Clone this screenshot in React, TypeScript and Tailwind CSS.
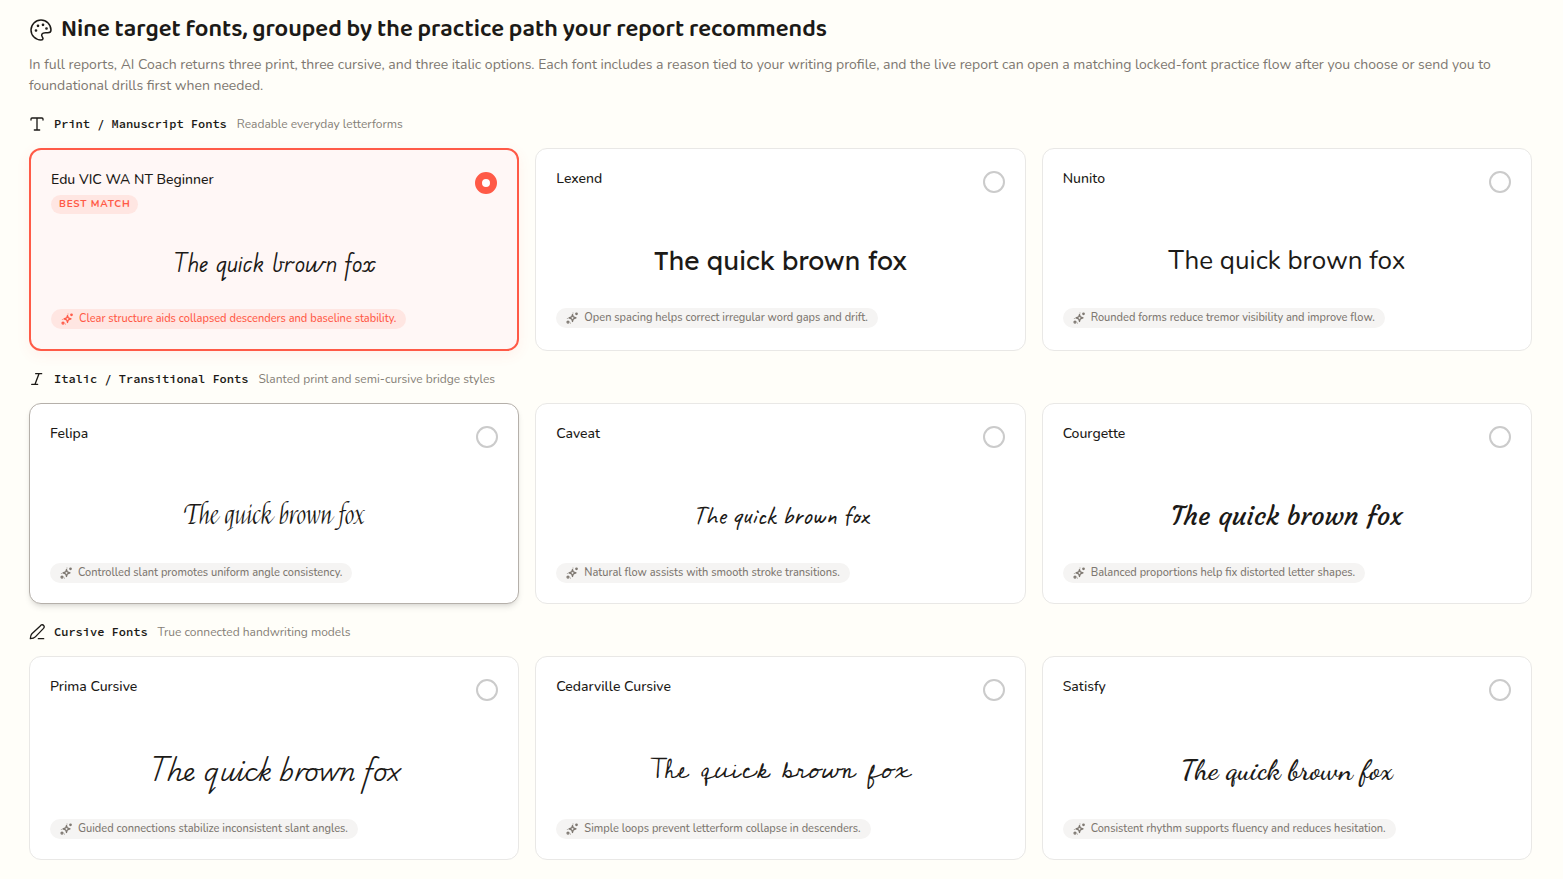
import { useState } from 'react';

const PREVIEW_TEXT = 'The quick brown fox';

const fontGroups = [
  {
    title: 'Print / Manuscript Fonts',
    subtitle: 'Readable everyday letterforms',
    icon: PrintIcon,
    previewHeight: 'min-h-[95px]',
    fonts: [
      {
        name: 'Edu VIC WA NT Beginner',
        reason: 'Clear structure aids collapsed descenders and baseline stability.',
        preview: "font-['Edu_VIC_WA_NT_Beginner','Lato',cursive] text-[26px]",
        best: true,
      },
      {
        name: 'Lexend',
        reason: 'Open spacing helps correct irregular word gaps and drift.',
        preview: "font-['Lexend','Inter',sans-serif] text-[26px]",
      },
      {
        name: 'Nunito',
        reason: 'Rounded forms reduce tremor visibility and improve flow.',
        preview: "font-['Nunito','Open_Sans',sans-serif] text-[26px]",
      },
    ],
  },
  {
    title: 'Italic / Transitional Fonts',
    subtitle: 'Slanted print and semi-cursive bridge styles',
    icon: ItalicIcon,
    previewHeight: 'min-h-[95px]',
    fonts: [
      {
        name: 'Felipa',
        reason: 'Controlled slant promotes uniform angle consistency.',
        preview: "font-['Felipa','Liberation_Serif',serif] text-[26px]",
        highlighted: true,
      },
      {
        name: 'Caveat',
        reason: 'Natural flow assists with smooth stroke transitions.',
        preview: "font-['Caveat','Lato',cursive] text-[26px]",
      },
      {
        name: 'Courgette',
        reason: 'Balanced proportions help fix distorted letter shapes.',
        preview: "font-['Courgette','Lato',cursive] text-[26px]",
      },
    ],
  },
  {
    title: 'Cursive Fonts',
    subtitle: 'True connected handwriting models',
    icon: CursiveIcon,
    previewHeight: 'min-h-[98px]',
    fonts: [
      {
        name: 'Prima Cursive',
        reason: 'Guided connections stabilize inconsistent slant angles.',
        preview: "font-['Prima_Cursive','Playwrite_NZ','Lato',cursive] font-light text-[25px]",
      },
      {
        name: 'Cedarville Cursive',
        reason: 'Simple loops prevent letterform collapse in descenders.',
        preview: "font-['Cedarville_Cursive','Lato',cursive] text-[28px]",
      },
      {
        name: 'Satisfy',
        reason: 'Consistent rhythm supports fluency and reduces hesitation.',
        preview: "font-['Satisfy','Dancing_Script','Lato',cursive] font-semibold text-[29px]",
      },
    ],
  },
];

function PaletteIcon() {
  return (
    <svg className="size-6 shrink-0" viewBox="0 0 24 24" fill="none" stroke="currentColor" strokeWidth="1.5" strokeLinejoin="round" aria-hidden="true">
      <path d="M22 12c0-5.5-4.5-10-10-10S2 6.500 2 12s4.500 10 10 10c.8 0 2-.1 2-1.200 0-.6-.3-1.100-.6-1.600-.6-.9-1.200-1.800-.5-3 .8-1.400 2.100-1.400 3.700-1.400h2.200c2 0 3.200-.9 3.200-2.800Z" />
      <circle cx="7" cy="12.500" r=".6" />
      <circle cx="9" cy="7.800" r=".6" />
      <circle cx="14" cy="6.800" r=".6" />
      <circle cx="17.500" cy="10.500" r=".6" />
    </svg>
  );
}

function PrintIcon() {
  return (
    <svg className="size-4 shrink-0" viewBox="0 0 24 24" fill="none" stroke="currentColor" strokeWidth="2" strokeLinecap="round" strokeLinejoin="round" aria-hidden="true">
      <path d="M12 3v18M8 21h8M3 6V4.500C3 3.500 3.500 3 4.500 3h15c1 0 1.500.5 1.500 1.500V6" />
    </svg>
  );
}

function ItalicIcon() {
  return (
    <svg className="size-4 shrink-0" viewBox="0 0 24 24" fill="none" stroke="currentColor" strokeWidth="2" strokeLinecap="round" aria-hidden="true">
      <path d="M10 4h9M4 20h9M15 4l-6 16" />
    </svg>
  );
}

function CursiveIcon() {
  return (
    <svg className="size-4 shrink-0" viewBox="0 0 24 24" fill="none" stroke="currentColor" strokeWidth="2" strokeLinecap="round" strokeLinejoin="round" aria-hidden="true">
      <path d="M16.500 3.300c1-1.100 1.500-1.600 2.100-1.900 1.400-.7 3.100.4 3.800 1.400.8 1.300.3 2.800-.6 3.800L9.500 19.300c-1.500 1.600-3.300 2.500-7.500 2.700.1-4 .8-5.800 2.300-7.400Z" />
      <path d="M14 22h8" />
    </svg>
  );
}

function SparkleIcon() {
  return (
    <svg className="size-3 shrink-0" viewBox="0 0 24 24" fill="none" stroke="currentColor" strokeWidth="2.500" strokeLinejoin="round" aria-hidden="true">
      <path d="m13 5 1.100 3.400c.4 1.200.9 1.700 2 2L20 11.800l-3.900 1.400c-1.100.4-1.600.9-2 2L13 19l-1.100-3.800c-.4-1.100-.9-1.600-2-2L6 11.800l3.900-1.400c1.100-.3 1.600-.8 2-2Z" />
      <circle cx="21" cy="3.500" r="1.500" />
      <circle cx="4" cy="20" r="2" />
      <path d="M14 1.500v1M3 13v1M10 22H9" />
    </svg>
  );
}

export default function App() {
  const [selected, setSelected] = useState('Edu VIC WA NT Beginner');

  return (
    <main className="min-h-screen bg-[#fffef9] pt-[15px] pb-5 pl-[29px] pr-[31px] font-['Nunito','Open_Sans',sans-serif] text-[#1c1a17]">
      {/* Header */}
      <header className="mb-[18px]">
        <h1 className="flex items-center gap-2 mb-[9px] font-['Baloo_2','Open_Sans',sans-serif] text-2xl leading-[30px] font-semibold">
          <PaletteIcon />
          Nine target fonts, grouped by the practice path your report recommends
        </h1>
        <p className="text-sm leading-[21px] text-[#7d7770]">
          In full reports, AI Coach returns three print, three cursive, and three italic options. Each font includes a
          reason tied to your writing profile, and the live report can open a matching locked-font practice flow after
          you choose or send you to foundational drills first when needed.
        </p>
      </header>

      {/* Font groups */}
      <div className="flex flex-col gap-[18px]">
        {fontGroups.map((group) => {
          const Icon = group.icon;
          return (
            <section key={group.title}>
              <div className="flex items-center h-5 mb-3.5">
                <Icon />
                <h2 className="ml-[9px] mr-2.5 font-['Source_Code_Pro','Liberation_Mono',monospace] text-xs font-semibold">
                  {group.title}
                </h2>
                <p className="text-xs text-[#857f77]">{group.subtitle}</p>
              </div>

              <div className="grid grid-cols-3 gap-4">
                {group.fonts.map((font) => {
                  const active = selected === font.name;
                  return (
                    <label
                      key={font.name}
                      className={`flex flex-col p-5 rounded-xl cursor-pointer ${
                        active
                          ? 'border-2 border-[#ff5a47] bg-[#fff7f6] shadow-[0_4px_14px_rgba(255,90,71,0.08)]'
                          : font.highlighted
                            ? 'border border-[#b5b0aa] bg-white shadow-md'
                            : 'border border-[#e9e8e6] bg-white'
                      }`}
                    >
                      <div className="flex items-start justify-between min-h-11">
                        <div>
                          <div className="text-sm leading-5 font-medium">{font.name}</div>
                          {font.best && (
                            <span className="inline-block mt-1 px-2 rounded-full bg-[#ffe6e2] text-[10px] leading-[19px] font-bold tracking-[0.08em] text-[#ff5a47]">
                              BEST MATCH
                            </span>
                          )}
                        </div>
                        <input
                          type="radio"
                          name="target-font"
                          checked={active}
                          onChange={() => setSelected(font.name)}
                          className="appearance-none size-[22px] mt-0.5 shrink-0 rounded-full border-2 border-[#cbcbcb] bg-white checked:border-7 checked:border-[#ff5a47]"
                        />
                      </div>
                      <div className={`flex items-center justify-center whitespace-nowrap leading-10 ${group.previewHeight}`}>
                        <span className={font.preview}>{PREVIEW_TEXT}</span>
                      </div>
                      <div
                        className={`flex items-center self-start gap-1.5 h-5 px-2.5 rounded-full text-[11px] font-medium ${
                          active ? 'bg-[#ffe6e2] text-[#ff5a47]' : 'bg-[#f5f4f3] text-[#7d7770]'
                        }`}
                      >
                        <SparkleIcon />
                        {font.reason}
                      </div>
                    </label>
                  );
                })}
              </div>
            </section>
          );
        })}
      </div>
    </main>
  );
}
